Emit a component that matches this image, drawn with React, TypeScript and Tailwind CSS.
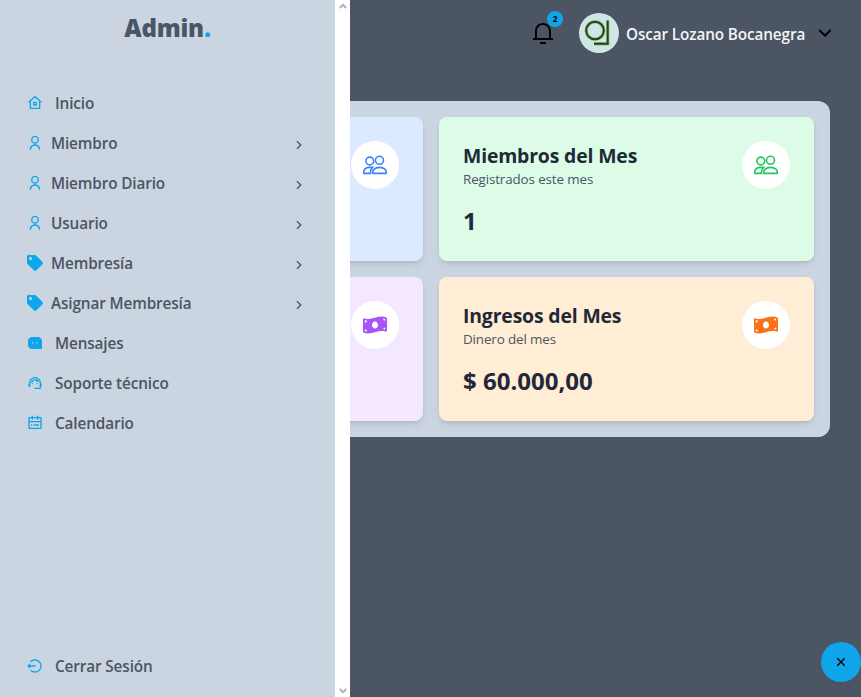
import type { ReactNode } from "react";
import {
  RiHome8Line,
  RiUserLine,
  RiCalendarTodoLine,
  RiLogoutCircleLine,
  RiArrowRightSLine,
  RiArrowDownSLine,
  RiNotification3Line,
  RiCloseFill,
} from "react-icons/ri";
import { FaTag, FaMoneyBillWave } from "react-icons/fa";
import { MdSupportAgent } from "react-icons/md";

function MessageIcon() {
  return (
    <svg viewBox="0 0 16 16" className="size-4" fill="currentColor">
      <path
        fillRule="evenodd"
        d="M5.200 2h5.600A4.200 4.200 0 0 1 15 6.200V14H5.200A4.200 4.200 0 0 1 1 9.800V6.200A4.200 4.200 0 0 1 5.200 2ZM5 7.200v1.400h1.400V7.200ZM9.200 7.200v1.400h1.400V7.200Z"
      />
    </svg>
  );
}

function PeopleIcon() {
  return (
    <svg viewBox="0 0 24 24" className="size-6" fill="none" stroke="currentColor" strokeWidth="1.6">
      <circle cx="6.800" cy="8" r="3.900" />
      <circle cx="16.500" cy="7.300" r="4" />
      <path d="M9.700 20.200c-.5-3 2.300-5.800 6.800-5.800s7.300 2.800 6.800 5.800c0 .1-.1.200-.3.200H10c-.2 0-.3-.1-.3-.2Z" />
      <path d="M7.500 20.400H1c-.2 0-.3-.1-.3-.2C.4 17 2.500 14.400 6 14.400h3.500c-1.600 1.500-2.400 3.600-2 6Z" />
    </svg>
  );
}

type Item = { label: string; icon: ReactNode; sub?: boolean };

const items: Item[] = [
  { label: "Inicio", icon: <RiHome8Line /> },
  { label: "Miembro", icon: <RiUserLine />, sub: true },
  { label: "Miembro Diario", icon: <RiUserLine />, sub: true },
  { label: "Usuario", icon: <RiUserLine />, sub: true },
  { label: "Membresía", icon: <FaTag />, sub: true },
  { label: "Asignar Membresía", icon: <FaTag />, sub: true },
  { label: "Mensajes", icon: <MessageIcon /> },
  { label: "Soporte técnico", icon: <MdSupportAgent /> },
  { label: "Calendario", icon: <RiCalendarTodoLine /> },
];

function NavItem({ label, icon, sub }: Item) {
  return (
    <li className="flex h-10 items-center pr-7 pl-[27px]">
      <span className="text-base text-[#0ea5e9]">{icon}</span>
      <span className={`flex-1 text-[15.3px] leading-6 tracking-[-0.12px] ${sub ? "ml-2" : "ml-3"}`}>{label}</span>
      {sub && <RiArrowRightSLine className="mt-1 size-4" />}
    </li>
  );
}

type CardProps = { title?: string; subtitle?: string; value?: string; bg: string; tint: string; icon: ReactNode };

function Card({ title, subtitle, value, bg, tint, icon }: CardProps) {
  return (
    <div className={`h-36 rounded-lg p-6 shadow-md ${bg}`}>
      <div className="flex justify-between">
        <div>
          <h2 className="pt-px text-[19.4px] leading-7 font-bold tracking-[-0.15px] text-[#1f2937]">{title}</h2>
          <p className="-mt-px text-[13.4px] leading-5 tracking-[-0.12px] text-[#4b5563]">{subtitle}</p>
        </div>
        <div className={`flex size-12 items-center justify-center rounded-full bg-white text-2xl ${tint}`}>{icon}</div>
      </div>
      <p className="mt-4 text-2xl font-bold text-[#1f2937]">{value}</p>
    </div>
  );
}

export default function App() {
  return (
    <div className="relative h-[697px] w-[861px] overflow-hidden bg-[#4b5563] font-['Open_Sans','Noto_Sans',sans-serif]">
      <header className="flex h-[66px] items-center justify-end pr-6">
        <div className="relative mr-6">
          <RiNotification3Line className="size-6 text-black" />
          <span className="absolute -top-2.5 left-4 flex size-4 items-center justify-center rounded-full bg-[#0ea5e9] text-[8px] font-bold text-black">
            2
          </span>
        </div>
        <svg viewBox="0 0 40 40" className="size-10">
          <circle cx="20" cy="20" r="20" fill="#cfe6e6" />
          <g fill="none" stroke="#9dbb7c" strokeWidth="3.400">
            <circle cx="16" cy="17.500" r="8.800" />
            <path d="M28.700 7.500v23.200H15" />
          </g>
          <g fill="none" stroke="#1f4420" strokeWidth="1.900">
            <circle cx="16" cy="17.500" r="8.800" />
            <path d="M28.700 7.500v23.200H15" />
          </g>
        </svg>
        <span className="mt-px ml-[7px] w-[182px] text-[15.3px] leading-6 font-semibold tracking-[-0.12px] whitespace-nowrap text-[#f3f4f6]">
          Oscar Lozano Bocanegra
        </span>
        <RiArrowDownSLine className="ml-[5px] size-6 text-black" />
      </header>

      <main className="mt-[35px] ml-8 grid w-[798px] grid-cols-2 gap-4 rounded-xl bg-[#cbd5e1] p-4">
        <Card bg="bg-[#dbeafe]" tint="text-[#3b82f6]" icon={<PeopleIcon />} />
        <Card title="Miembros del Mes" subtitle="Registrados este mes" value="1" bg="bg-[#dcfce7]" tint="text-[#22c55e]" icon={<PeopleIcon />} />
        <Card bg="bg-[#f3e8ff]" tint="text-[#a855f7]" icon={<FaMoneyBillWave />} />
        <Card title="Ingresos del Mes" subtitle="Dinero del mes" value="$ 60.000,00" bg="bg-[#ffedd5]" tint="text-[#f97316]" icon={<FaMoneyBillWave />} />
      </main>

      <aside className="absolute top-0 left-0 flex h-full w-[350px] bg-white font-semibold text-[#4b5563]">
        <div className="flex w-[335px] flex-col bg-[#cbd5e1]">
          <h1 className="mt-3 mb-px text-center text-2xl font-extrabold tracking-[-0.2px]">
            Admin<span className="text-[#0ea5e9]">.</span>
          </h1>
          <ul className="mt-[38px]">
            {items.map((i) => (
              <NavItem key={i.label} {...i} />
            ))}
          </ul>
          <ul className="mt-auto mb-[11px]">
            <NavItem label="Cerrar Sesión" icon={<RiLogoutCircleLine />} />
          </ul>
        </div>
        <div className="flex w-[15px] flex-col items-center justify-between py-[3px]">
          <svg viewBox="0 0 8 6" className="h-[6px] w-2" fill="none" stroke="#b0b0b0" strokeWidth="1.800">
            <path d="m.8 5 3.200-3.200L7.200 5" />
          </svg>
          <svg viewBox="0 0 8 6" className="h-[6px] w-2" fill="none" stroke="#b0b0b0" strokeWidth="1.800">
            <path d="m.8 1 3.200 3.200L7.200 1" />
          </svg>
        </div>
      </aside>

      <button className="absolute top-[642px] left-[821px] flex size-10 items-center justify-center rounded-full bg-[#0ea5e9] text-black">
        <RiCloseFill className="size-4" />
      </button>
    </div>
  );
}
